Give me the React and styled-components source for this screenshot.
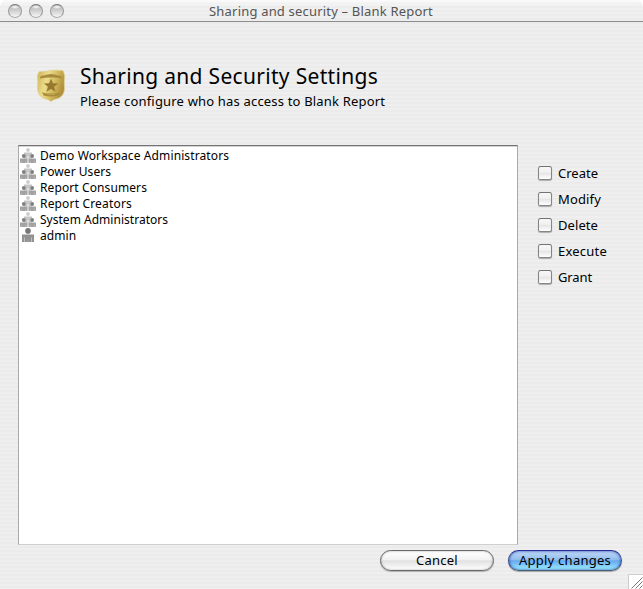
import React from 'react';
import styled, { createGlobalStyle, css } from 'styled-components';

const GlobalStyle = createGlobalStyle`
  * { box-sizing: border-box; }
  body { margin: 0; background: #fff; }
`;

const Window = styled.main`
  width: 643px;
  height: 589px;
  display: flex;
  flex-direction: column;
  overflow: hidden;
  border-radius: 7px 7px 0 0;
  color: #000;
  font-family: 'Noto Sans', 'Open Sans', sans-serif;
  font-size: 13px;
  background: repeating-linear-gradient(#efefef 0 2px, #ebebeb 2px 4px);
`;

const TitleBar = styled.header`
  flex: none;
  display: grid;
  grid-template-columns: 72px 1fr 72px;
  height: 22px;
  padding-left: 8px;
  padding-right: 9px;
  border-bottom: 1px solid #8c8c8c;
  background: linear-gradient(rgba(255, 255, 255, 0.75), rgba(255, 255, 255, 0.1) 6px, transparent);
`;

const Lights = styled.div`
  display: flex;
  gap: 7px;
  padding-top: 4px;
`;

const Light = styled.span`
  width: 14px;
  height: 14px;
  border-radius: 50%;
  border: 1px solid #979797;
  border-top-color: #7a7a7a;
  border-bottom-color: #acacac;
  background: radial-gradient(ellipse 5px 2px at 50% 2px, #fff, transparent),
    linear-gradient(#b4b4b4, #cecece 45%, #f6f6f6);
`;

const Title = styled.h1`
  margin: 0;
  text-align: center;
  font-size: 13px;
  font-weight: 400;
  line-height: 22px;
  letter-spacing: 0.19px;
  color: #555;
  white-space: nowrap;
`;

const Heading = styled.section`
  flex: none;
  display: flex;
  height: 123px;
  padding: 40px 0 0 36px;
  gap: 14px;
`;

const ShieldIcon = styled.svg`
  width: 30px;
  height: 34px;
  margin-top: 7px;
`;

const HeadingText = styled.div`
  white-space: nowrap;
`;

const Headline = styled.h2`
  margin: 0;
  font-size: 21px;
  font-weight: 400;
  line-height: 28px;
  letter-spacing: 0.31px;
`;

const Subtitle = styled.p`
  margin: 0;
  line-height: 22px;
  letter-spacing: 0.18px;
`;

const Content = styled.section`
  flex: none;
  display: flex;
  gap: 20px;
  padding-left: 18px;
`;

const ListBox = styled.ul`
  width: 500px;
  height: 400px;
  margin: 0;
  padding: 2px 1px;
  list-style: none;
  background: #fff;
  border: 1px solid #a9a9a9;
  border-top-color: #737373;
  border-bottom-color: #cfcfcf;
  box-shadow: inset 0 1px #d5d5d5;
`;

const ListItem = styled.li`
  display: flex;
  align-items: center;
  gap: 4px;
  height: 16px;
  font-size: 12px;
  line-height: 16px;
  letter-spacing: ${(p) => p.$tracking}px;
  white-space: nowrap;
`;

const RowIcon = styled.svg`
  flex: none;
  width: 16px;
  height: 16px;
`;

const Permissions = styled.div`
  display: flex;
  flex-direction: column;
  padding-top: 15px;
`;

const Permission = styled.label`
  display: flex;
  align-items: center;
  gap: 6px;
  height: 26px;
  letter-spacing: ${(p) => p.$tracking}px;
`;

const CheckBox = styled.input.attrs({ type: 'checkbox' })`
  appearance: none;
  width: 14px;
  height: 14px;
  margin: 0;
  border: 1px solid #858585;
  border-top-color: #737373;
  border-radius: 2.5px;
  background: linear-gradient(#f8f8f8, #f0f0f0 45%, #e4e4e4 50%, #fff);
  box-shadow: 0 1px 1px rgba(0, 0, 0, 0.28);
`;

const Footer = styled.footer`
  flex: 1;
  display: flex;
  gap: 14px;
  padding: 5px 0 0 380px;
`;

const Button = styled.button`
  width: 114px;
  height: 21px;
  padding: 0 0 1px;
  border: 1px solid #6a6a6a;
  border-radius: 11px;
  font: inherit;
  line-height: 18px;
  letter-spacing: 0.25px;
  color: #000;
  background: linear-gradient(#fff, #f3f3f3 45%, #e1e1e1 52%, #fff);
  box-shadow: inset 0 0 2px rgba(0, 0, 0, 0.4), 0 1px 1px rgba(0, 0, 0, 0.25);
  ${(p) =>
    p.$primary &&
    css`
      border-color: #2a2a98 #3c4c8c #4a607a;
      background: linear-gradient(#c3daf6, #91bdee 45%, #68a8ec 52%, #85cffb 78%, #a5f4ff);
      box-shadow: inset 0 0 3px #1b49ae, 0 1px 1px rgba(0, 0, 0, 0.3);
    `}
`;

const Grip = styled.svg`
  width: 15px;
  height: 15px;
  margin: auto 0 0 -8px;
`;

const GroupGlyph = () => (
  <RowIcon viewBox="0 0 16 16">
    <circle cx="8" cy="2" r="1.9" fill="#cdcdcd" />
    <path d="M4 4.5h8v6H4z" fill="#c6c6c6" />
    <path d="M7 8h2v6.5H7z" fill="#dcdcdc" />
    <circle cx="3.8" cy="8" r="1.9" fill="#808080" />
    <circle cx="12.2" cy="8" r="1.9" fill="#808080" />
    <path d="M0 10.5h7.3V15H0zM8.7 10.5H16V15H8.7z" fill="#a2a2a2" />
    <path d="M1.5 12.8v2.2M5.8 12.8v2.2M10.2 12.8v2.2M14.5 12.8v2.2" stroke="#c6c6c6" strokeWidth=".6" />
  </RowIcon>
);

const PersonGlyph = () => (
  <RowIcon viewBox="0 0 16 16">
    <circle cx="8" cy="2.9" r="2.8" fill="#777" />
    <path d="M2 6.5h12V14H2z" fill="#929292" />
    <path d="M4.5 9.5V14M11.5 9.5V14" stroke="#c4c4c4" strokeWidth=".9" />
    <path d="M8 11v3" stroke="#a4a4a4" />
  </RowIcon>
);

const ENTRIES = [
  ['Demo Workspace Administrators', 0.11, GroupGlyph],
  ['Power Users', 0.04, GroupGlyph],
  ['Report Consumers', 0.1, GroupGlyph],
  ['Report Creators', 0.17, GroupGlyph],
  ['System Administrators', 0.02, GroupGlyph],
  ['admin', 0.08, PersonGlyph],
];

const PERMISSIONS = [
  ['Create', 0.02],
  ['Modify', 0.15],
  ['Delete', 0.08],
  ['Execute', 0.22],
  ['Grant', -0.1],
];

export default function App() {
  return (
    <>
      <GlobalStyle />
      <Window>
        <TitleBar>
          <Lights>
            <Light />
            <Light />
            <Light />
          </Lights>
          <Title>Sharing and security – Blank Report</Title>
        </TitleBar>
        <Heading>
          <ShieldIcon viewBox="0 0 30 34">
            <defs>
              <linearGradient id="gold" x1="0" y1="0" x2="1" y2=".35">
                <stop offset="0" stopColor="#cfae50" />
                <stop offset=".4" stopColor="#ecdd8c" />
                <stop offset=".7" stopColor="#d3b95c" />
                <stop offset="1" stopColor="#b0903a" />
              </linearGradient>
            </defs>
            <path
              d="M3.5 2.5Q9 3 15 1.2Q21 1 27 1.5Q28 4 28.7 7Q27.8 13 28.5 20Q28 27 22 29.5Q18 30 15 32.5Q12 30 8 29.5Q2 27 1.5 20Q2.2 13 1.3 7Q2 4 3.5 2.5Z"
              fill="url(#gold)"
              stroke="#ded194"
              strokeWidth=".7"
            />
            <path d="M4 9.5Q4 6 8 6.5Q15 3.5 22 6.5Q26 6 26 9.5Q20 8 15 8.5Q10 8 4 9.5Z" fill="#a68a3d" />
            <path d="M15 9.5l1.9 4.8 5.2.2-4 3.3 1.4 5-4.5-2.8-4.5 2.8 1.4-5-4-3.3 5.2-.2z" fill="#96792f" />
            <path d="M6 23q3 2 5 1.3h8q2 .7 5-1.3l-1.5 3.4q-7.500 2-15 0z" fill="#a88a3b" />
            <path d="M11 25h8" stroke="#c9b25f" />
          </ShieldIcon>
          <HeadingText>
            <Headline>Sharing and Security Settings</Headline>
            <Subtitle>Please configure who has access to Blank Report</Subtitle>
          </HeadingText>
        </Heading>
        <Content>
          <ListBox>
            {ENTRIES.map(([name, tracking, Glyph]) => (
              <ListItem key={name} $tracking={tracking}>
                <Glyph />
                {name}
              </ListItem>
            ))}
          </ListBox>
          <Permissions>
            {PERMISSIONS.map(([name, tracking]) => (
              <Permission key={name} $tracking={tracking}>
                <CheckBox />
                {name}
              </Permission>
            ))}
          </Permissions>
        </Content>
        <Footer>
          <Button>Cancel</Button>
          <Button $primary>Apply changes</Button>
          <Grip viewBox="0 0 15 15">
            <path d="M0 0h15v15H0z" fill="#fff" />
            <path d="M.5 15V.5H15" fill="none" stroke="#ccc" />
            <path d="M3.5 14.5l11-11M7.5 14.5l7-7M11.5 14.5l3-3" stroke="#777" />
          </Grip>
        </Footer>
      </Window>
    </>
  );
}
